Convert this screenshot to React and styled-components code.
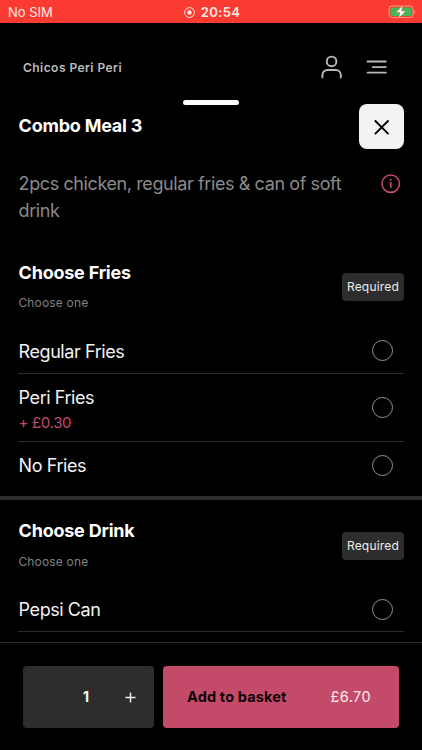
import React from "react";
import styled, { createGlobalStyle } from "styled-components";

const Global = createGlobalStyle`
  * { box-sizing: border-box; }
  body { margin: 0; background: #000; font-family: Inter, "Liberation Sans", sans-serif; }
  button { font-family: inherit; border: 0; padding: 0; }
  h1, h2, p { margin: 0; }
`;

const Screen = styled.div`
  width: 422px;
  height: 750px;
  overflow: hidden;
  background: #000;
  color: #fff;
  display: flex;
  flex-direction: column;
  white-space: nowrap;
`;

const StatusBar = styled.div`
  height: 23px;
  flex: none;
  background: #fb3b31;
  color: #ffe9e5;
  display: grid;
  grid-template-columns: 1fr auto 1fr;
  align-items: center;
  padding: 1px 6px 0 8px;
  line-height: 20px;
`;

const Carrier = styled.span`
  font-size: 13px;
`;

const Clock = styled.span`
  display: flex;
  align-items: center;
  gap: 6px;
  font-size: 13px;
  font-weight: 600;
  letter-spacing: 0.35px;
`;

const BatteryIcon = styled.svg`
  justify-self: end;
  display: block;
`;

const TopBar = styled.header`
  height: 77px;
  flex: none;
  display: flex;
  align-items: center;
  padding: 11px 34px 0 23px;
`;

const Brand = styled.span`
  flex: 1;
  font-size: 12px;
  font-weight: 600;
  letter-spacing: 0.45px;
  color: #bdbdbd;
`;

const TopIcons = styled.div`
  display: flex;
  align-items: center;
  gap: 24px;
  svg { display: block; }
`;

const Sheet = styled.main`
  flex: 1;
  min-height: 0;
  overflow: hidden;
`;

const Handle = styled.div`
  width: 56px;
  height: 5px;
  margin: 0 0 -1px 183px;
  border-radius: 3px;
  background: #fff;
`;

const TitleRow = styled.div`
  display: flex;
  justify-content: space-between;
  align-items: center;
  height: 45px;
  padding: 0 18px;
`;

const Title = styled.h1`
  padding: 0 0 1px 0.6px;
  font-size: 18px;
  line-height: 24px;
  font-weight: 700;
  letter-spacing: -0.23px;
`;

const CloseButton = styled.button`
  width: 45px;
  height: 45px;
  border-radius: 8px;
  background: #f3f3f3;
  display: grid;
  place-items: center;
`;

const Description = styled.div`
  display: flex;
  justify-content: space-between;
  align-items: flex-start;
  height: 92px;
  padding: 21px 21px 0 18.6px;
  font-size: 18px;
  line-height: 27px;
  color: #8a8a8a;
  p { width: 335px; white-space: normal; letter-spacing: -0.4px; }
  svg { display: block; margin-top: 4px; }
`;

const Group = styled.section`
  padding: 19px 18px 0;
  border-bottom: ${(p) => (p.$last ? "0" : "4px solid #2d2d2d")};
`;

const GroupHead = styled.div`
  display: flex;
  justify-content: space-between;
  height: 68px;
`;

const GroupTitle = styled(Title)`
  padding: ${(p) => (p.$raised ? "0 0 1px 0.6px" : "1px 0 0 0.6px")};
`;

const Hint = styled.p`
  margin-top: 9px;
  padding-left: 0.4px;
  font-size: 12px;
  line-height: 18px;
  letter-spacing: 0.17px;
  color: #808080;
`;

const Badge = styled.span`
  width: 62px;
  height: 28px;
  margin-top: 13px;
  border-radius: 4px;
  background: #2d2d2d;
  color: #ededed;
  font-size: 12px;
  line-height: 28px;
  text-align: center;
  letter-spacing: 0.2px;
`;

const Option = styled.div`
  display: flex;
  justify-content: space-between;
  align-items: center;
  height: ${(p) => p.$height}px;
  padding: 0 11.5px ${(p) => (p.$last ? 8 : 0)}px 0.6px;
  border-bottom: ${(p) => (p.$last ? "0" : "1px solid #2b2b2b")};
`;

const OptionText = styled.div`
  padding-top: ${(p) => (p.$withExtra ? 4 : 1)}px;
`;

const OptionName = styled.div`
  font-size: 18px;
  line-height: 25px;
  letter-spacing: -0.43px;
  color: #f2f2f2;
`;

const Extra = styled.div`
  font-size: 15px;
  line-height: 25px;
  letter-spacing: -0.35px;
  color: #c34a6b;
`;

const Radio = styled.span`
  width: 21px;
  height: 21px;
  border: 1px solid #929292;
  border-radius: 50%;
`;

const Footer = styled.footer`
  flex: none;
  height: 108px;
  border-top: 1px solid #2b2b2b;
  display: flex;
  align-items: flex-start;
  gap: 9px;
  padding: 22.6px 23px 0;
`;

const Stepper = styled.div`
  width: 131px;
  height: 62px;
  border-radius: 4px;
  background: #2d2d2d;
  display: flex;
  align-items: center;
  justify-content: flex-end;
  padding: 0 18px 1px 0;
  gap: 36px;
  font-size: 14px;
  font-weight: 700;
  svg { display: block; margin-top: 2px; }
`;

const AddButton = styled.button`
  flex: 1;
  height: 62px;
  border-radius: 4px;
  background: #c44a6a;
  display: flex;
  align-items: center;
  justify-content: space-between;
  padding: 0 28px 1px 24px;
  font-size: 14.5px;
  color: #0c0205;
`;

const AddLabel = styled.span`
  font-weight: 700;
  letter-spacing: 0.15px;
`;

const Price = styled.span`
  color: #fde9ee;
  letter-spacing: 0.4px;
`;

function OptionGroup({ title, options, last }) {
  return (
    <Group $last={last}>
      <GroupHead>
        <div>
          <GroupTitle as="h2" $raised={last}>{title}</GroupTitle>
          <Hint>Choose one</Hint>
        </div>
        <Badge>Required</Badge>
      </GroupHead>
      {options.map((o) => (
        <Option key={o.name} $height={o.height} $last={o.last}>
          <OptionText $withExtra={!!o.extra}>
            <OptionName>{o.name}</OptionName>
            {o.extra && <Extra>{o.extra}</Extra>}
          </OptionText>
          <Radio />
        </Option>
      ))}
    </Group>
  );
}

const fries = [
  { name: "Regular Fries", height: 46 },
  { name: "Peri Fries", extra: "+ £0.30", height: 68 },
  { name: "No Fries", height: 54, last: true },
];
const drinks = [{ name: "Pepsi Can", height: 45 }];

export default function App() {
  return (
    <Screen>
      <Global />
      <StatusBar>
        <Carrier>No SIM</Carrier>
        <Clock>
          <svg width="11" height="11" viewBox="0 0 11 11">
            <circle cx="5.5" cy="5.5" r="4.9" fill="none" stroke="currentColor" />
            <circle cx="5.5" cy="5.5" r="2.2" fill="currentColor" />
          </svg>
          20:54
        </Clock>
        <BatteryIcon width="28" height="14" viewBox="0 0 28 14">
          <rect x="1" y="1" width="24" height="11.5" rx="3" fill="none" stroke="#f69a84" />
          <rect x="2.5" y="2.5" width="21" height="8.5" rx="1.7" fill="#43b955" />
          <path d="M26.3 5v3.6c1.3-.6 1.3-3 0-3.6Z" fill="#f69a84" />
          <path d="M14.9.3 7.9 7.4h4l-1.5 6.1 7.4-7.6h-4.2Z" fill="#fff" stroke="#d65a42" strokeWidth=".5" />
        </BatteryIcon>
      </StatusBar>
      <TopBar>
        <Brand>Chicos Peri Peri</Brand>
        <TopIcons>
          <svg width="22" height="24" viewBox="0 0 22 24" fill="none" stroke="#b9b9b9" strokeWidth="1.9" strokeLinecap="round">
            <circle cx="11.6" cy="6.4" r="4.8" />
            <path d="M2.4 22.4V20a5 5 0 0 1 5-5h8.4a5 5 0 0 1 5 5v2.4" />
          </svg>
          <svg width="22" height="16" viewBox="0 0 22 16" fill="none" stroke="#b9b9b9" strokeWidth="1.9" strokeLinecap="round">
            <path d="M1.6 2.5h18.2M6.8 8.1h13M1.6 13.6h18.2" />
          </svg>
        </TopIcons>
      </TopBar>
      <Sheet>
        <Handle />
        <TitleRow>
          <Title>Combo Meal 3</Title>
          <CloseButton aria-label="Close">
            <svg width="16" height="16" viewBox="0 0 16 16" fill="none" stroke="#000" strokeWidth="1.9" strokeLinecap="round">
              <path d="m1.4 2 12.6 12.6M14 2 1.4 14.6" />
            </svg>
          </CloseButton>
        </TitleRow>
        <Description>
          <p>2pcs chicken, regular fries &amp; can of soft drink</p>
          <svg width="20" height="20" viewBox="0 0 20 20" fill="none" stroke="#c34a6b">
            <circle cx="9.7" cy="9.7" r="8.7" strokeWidth="1.6" />
            <path d="M9.7 8.1v5.7" strokeWidth="1.8" />
            <circle cx="9.7" cy="5.7" r="1" fill="#c34a6b" stroke="none" />
          </svg>
        </Description>
        <OptionGroup title="Choose Fries" options={fries} />
        <OptionGroup title="Choose Drink" options={drinks} last />
      </Sheet>
      <Footer>
        <Stepper>
          1
          <svg width="11" height="11" viewBox="0 0 11 11" stroke="#f2f2f2" strokeWidth="1.4">
            <path d="M5.5.5v10M.5 5.5h10" />
          </svg>
        </Stepper>
        <AddButton>
          <AddLabel>Add to basket</AddLabel>
          <Price>£6.70</Price>
        </AddButton>
      </Footer>
    </Screen>
  );
}
